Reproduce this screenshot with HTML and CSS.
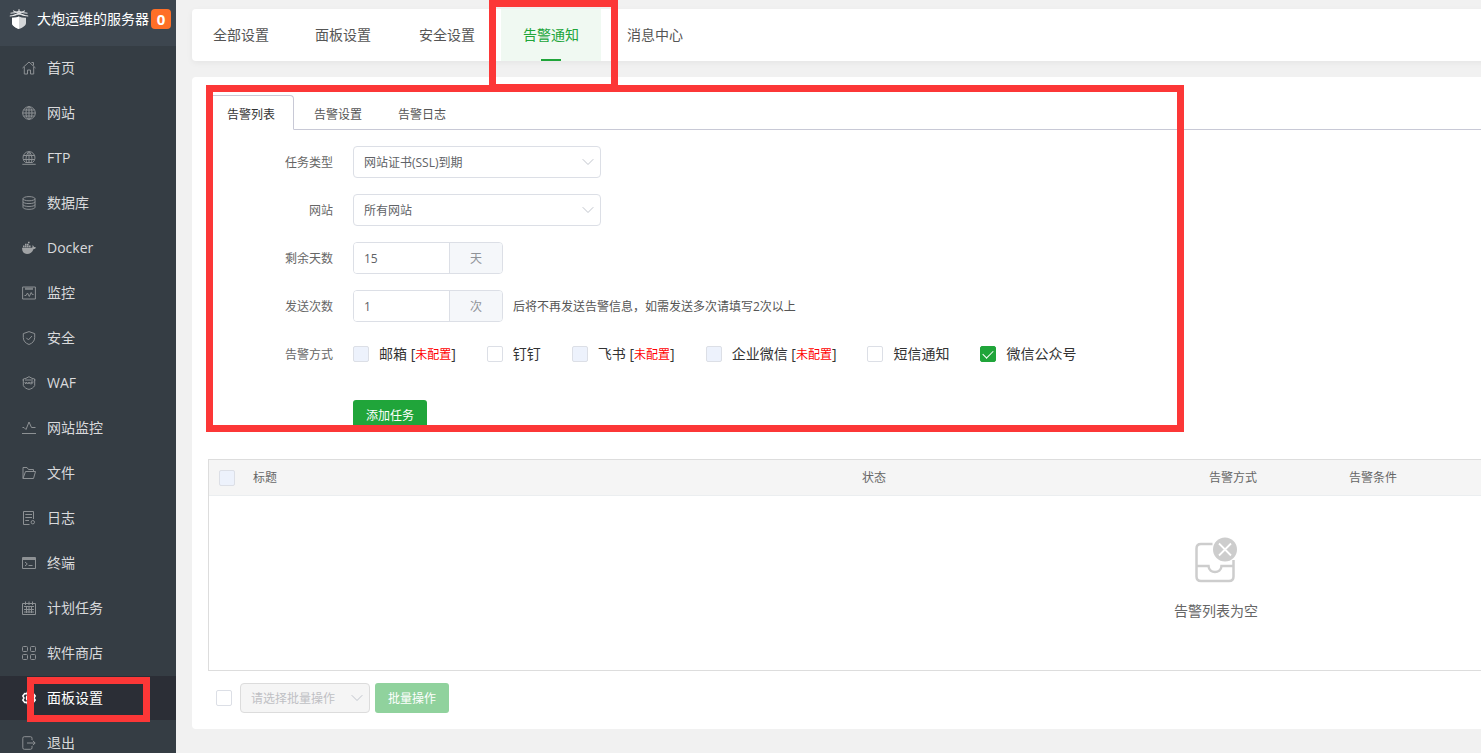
FILE: index.html
```html
<!DOCTYPE html>
<html lang="zh-CN">
<head>
<meta charset="utf-8">
<title>面板设置</title>
<link rel="stylesheet" href="styles.css">
</head>
<body>
<div class="app">
  <aside class="sidebar">
    <header class="brand">
      <svg class="brand-logo" viewBox="0 0 20 20" fill="none">
        <path d="M3 8.800Q7 9 10 7.600Q13 9 17 8.800V14C17 17 13.500 18.600 10 20C6.500 18.600 3 17 3 14Z" fill="#d4d6d8"/>
        <path d="M3 8.800Q7 9 10 7.600V20C6.500 18.600 3 17 3 14Z" fill="#fff"/>
        <path d="M.8 7Q6 6.800 10 4.800Q14 6.800 19.200 7M1.500 4.200Q6.500 4.200 10 2.200Q13.500 4.200 18.500 4.200M4 1.800L16 6.500M16 1.800L4 6.500M10 .2V6" stroke="#e8e9ea" stroke-width="1"/>
      </svg>
      <span class="brand-name">大炮运维的服务器</span>
      <span class="brand-badge">0</span>
    </header>
    <nav class="menu">
      <a class="menu-item" href="#"><svg class="menu-icon" viewBox="0 0 14 14"><path d="M.5 7L7 1L13.500 7M2.300 6V13H5.500V9H8.500V13H11.700V6M9.500 1.500H11.500V4.500"/></svg>首页</a>
      <a class="menu-item" href="#"><svg class="menu-icon" viewBox="0 0 14 14"><circle cx="7" cy="7" r="6.300"/><ellipse cx="7" cy="7" rx="3" ry="6.300"/><path d="M7 .7V13.300M.7 7H13.300M1.500 4H12.500M1.500 10H12.500"/></svg>网站</a>
      <a class="menu-item" href="#"><svg class="menu-icon" viewBox="0 0 14 14"><path d="M3.500 11.500A6 6 0 1 1 10.500 11.500M4.800 11.500C3.500 8.500 3.800 3.500 7 .7C10.200 3.500 10.500 8.500 9.200 11.500M7 .7V11.500M1.300 4.500H12.700M1.200 8.500H12.800M.3 13.300H13.700M3.500 11.500H10.500"/></svg>FTP</a>
      <a class="menu-item" href="#"><svg class="menu-icon" viewBox="0 0 14 14"><ellipse cx="7" cy="2.700" rx="6" ry="2.100"/><path d="M1 2.700V11.300C1 14 13 14 13 11.300V2.700M1 5.700C1 8.200 13 8.200 13 5.700M1 8.600C1 11.100 13 11.100 13 8.600"/></svg>数据库</a>
      <a class="menu-item" href="#"><svg class="menu-icon menu-icon-solid" viewBox="0 0 14 14"><path d="M.1 6.800H9.500C10.500 6.800 10.700 6 10.300 4.300C11.400 4.700 11.900 5.300 12 6C12.900 5.800 13.500 6 14 6.400C13.500 7.600 12.500 7.900 11.600 7.900C10.400 11.200 8 12.900 5 12.900C1.800 12.900 -.2 10.700.1 6.800ZM1 4.600H2.600V6.300H1ZM3 4.600H4.600V6.300H3ZM5 4.600H6.600V6.300H5ZM7 4.600H8.600V6.300H7ZM3 2.700H4.600V4.200H3ZM5 2.700H6.600V4.200H5ZM6 .8H7.600V2.300H6Z"/></svg>Docker</a>
      <a class="menu-item" href="#"><svg class="menu-icon" viewBox="0 0 14 14"><path d="M.6 1H13.400V13H.6ZM3 3.200H11M3 2.200H11M2.500 9.500H4L5.500 7L7.300 10.500L9.200 6.500L10.300 8.500H11.500"/></svg>监控</a>
      <a class="menu-item" href="#"><svg class="menu-icon" viewBox="0 0 14 14"><path d="M7 .6L12.700 2.600V6.500C12.700 10 10.500 12.200 7 13.500C3.500 12.200 1.300 10 1.300 6.500V2.600ZM4.300 6.800L6.400 8.900L10 5"/></svg>安全</a>
      <a class="menu-item" href="#"><svg class="menu-icon" viewBox="0 0 14 14"><path d="M1.300 5V3L4 2.300L7 .7L10 2.300L12.700 3V5M1.300 9.500C2.500 11.800 4.500 12.800 7 13.400C9.500 12.800 11.500 11.800 12.700 9.500M1.300 3V9.500M12.700 3V9.500M3 4H11M2.800 6L3.700 8L4.600 6L5.500 8M6 8L7 6L8 8M9 8.500V6H11.500M9 7H11"/></svg>WAF</a>
      <a class="menu-item" href="#"><svg class="menu-icon" viewBox="0 0 14 14"><path d="M.5 6.500H2L4 8.500L7 1L9.500 6.500H13.500M0 12.500H14"/></svg>网站监控</a>
      <a class="menu-item" href="#"><svg class="menu-icon" viewBox="0 0 14 14"><path d="M1 12.500V1.500H5L6.500 3.500H11.500V5.500M1 12.500L3.500 5.500H13.500L11.500 12.500Z"/></svg>文件</a>
      <a class="menu-item" href="#"><svg class="menu-icon" viewBox="0 0 14 14"><path d="M7.500 13.500H1.500V.5H11.500V8M3.300 3.500H10M3.300 6.500H10M3.300 9.500H7"/><circle cx="10.800" cy="11.200" r="1.700"/></svg>日志</a>
      <a class="menu-item" href="#"><svg class="menu-icon" viewBox="0 0 14 14"><path d="M.5 1.500H13.500V12.500H.5ZM3 6L5.300 8L3 10M6.500 9.500H10.500M.5 2.500H13.500M.5 3.500H13.500"/></svg>终端</a>
      <a class="menu-item" href="#"><svg class="menu-icon" viewBox="0 0 14 14"><path d="M.5 2.500H13.500V13.500H.5ZM3.500.5V4M7 .5V4M10.500.5V4M2 5.500H12M2 8.500H12M2 11H12M4.500 5V12M7 5V12M9.500 5V12"/></svg>计划任务</a>
      <a class="menu-item" href="#"><svg class="menu-icon" viewBox="0 0 14 14"><rect x=".5" y=".5" width="5" height="5" rx="1"/><rect x="8.500" y=".5" width="5" height="5" rx="1"/><rect x=".5" y="8.500" width="5" height="5" rx="1"/><rect x="8.500" y="8.500" width="5" height="5" rx="1"/></svg>软件商店</a>
      <a class="menu-item menu-item-active" href="#" aria-current="page"><svg class="menu-icon" viewBox="0 0 14 14"><path d="M5.500 1H8.500L9.200 2.800L11.300 2.500L13.200 5L12 7L13.200 9L11.300 11.500L9.200 11.200L8.500 13H5.500L4.800 11.200L2.700 11.500L.8 9L2 7L.8 5L2.700 2.500L4.800 2.800Z"/><circle cx="7" cy="7" r="2.500"/></svg>面板设置</a>
      <a class="menu-item" href="#"><svg class="menu-icon" viewBox="0 0 14 14"><path d="M10 4V2.200Q10 .7 8.500 .7H2.300Q.8 .7 .8 2.200V11.800Q.8 13.300 2.300 13.300H8.500Q10 13.300 10 11.800V10M5 7H13M10.800 4.800L13.200 7L10.800 9.200"/></svg>退出</a>
    </nav>
  </aside>

  <main class="content">
    <nav class="topnav">
      <a class="topnav-item" href="#">全部设置</a>
      <a class="topnav-item" href="#">面板设置</a>
      <a class="topnav-item" href="#">安全设置</a>
      <a class="topnav-item topnav-item-active" href="#" aria-current="page">告警通知</a>
      <a class="topnav-item" href="#">消息中心</a>
    </nav>

    <section class="card">
      <div class="tabs" role="tablist">
        <button class="tab tab-active" type="button" role="tab" aria-selected="true">告警列表</button>
        <button class="tab" type="button" role="tab" aria-selected="false">告警设置</button>
        <button class="tab" type="button" role="tab" aria-selected="false">告警日志</button>
      </div>

      <form class="form">
        <div class="form-row">
          <label class="form-label" for="task-type">任务类型</label>
          <div class="select">
            <select class="select-field" id="task-type"><option>网站证书(SSL)到期</option></select>
            <svg class="select-arrow" viewBox="0 0 12 8"><path d="M.7 1.200L6 6.500L11.300 1.200"/></svg>
          </div>
        </div>
        <div class="form-row">
          <label class="form-label" for="site">网站</label>
          <div class="select">
            <select class="select-field" id="site"><option>所有网站</option></select>
            <svg class="select-arrow" viewBox="0 0 12 8"><path d="M.7 1.200L6 6.500L11.300 1.200"/></svg>
          </div>
        </div>
        <div class="form-row">
          <label class="form-label" for="days">剩余天数</label>
          <div class="input-group">
            <input class="input-field" id="days" type="text" value="15">
            <span class="input-unit">天</span>
          </div>
        </div>
        <div class="form-row">
          <label class="form-label" for="times">发送次数</label>
          <div class="input-group">
            <input class="input-field" id="times" type="text" value="1">
            <span class="input-unit">次</span>
          </div>
          <span class="form-hint">后将不再发送告警信息，如需发送多次请填写2次以上</span>
        </div>
        <div class="form-row">
          <span class="form-label">告警方式</span>
          <div class="checks">
            <label class="check"><input class="checkbox" type="checkbox" disabled><span>邮箱 [<span class="warn">未配置</span>]</span></label>
            <label class="check"><input class="checkbox" type="checkbox"><span>钉钉</span></label>
            <label class="check"><input class="checkbox" type="checkbox" disabled><span>飞书 [<span class="warn">未配置</span>]</span></label>
            <label class="check"><input class="checkbox" type="checkbox" disabled><span>企业微信 [<span class="warn">未配置</span>]</span></label>
            <label class="check"><input class="checkbox" type="checkbox"><span>短信通知</span></label>
            <label class="check"><input class="checkbox" type="checkbox" checked><span>微信公众号</span></label>
          </div>
        </div>
        <div class="form-actions">
          <button class="button" type="button">添加任务</button>
        </div>
      </form>

      <table class="table">
        <colgroup>
          <col class="col-check"><col class="col-title"><col class="col-status"><col class="col-method"><col>
        </colgroup>
        <thead>
          <tr>
            <th><input class="checkbox" type="checkbox" aria-label="全选" disabled></th>
            <th>标题</th>
            <th>状态</th>
            <th>告警方式</th>
            <th>告警条件</th>
          </tr>
        </thead>
        <tbody>
          <tr>
            <td colspan="5">
              <div class="empty">
                <svg class="empty-icon" viewBox="0 0 44 48" fill="none">
                  <path d="M18.500 7H7Q2.500 7 2.500 11.500V39.500Q2.500 44 7 44H35Q39.500 44 39.500 39.500V23M2.500 29H14.500C15 37 27 37 27.500 29H39.500" stroke="#cdcdcd" stroke-width="2.500"/>
                  <circle cx="31" cy="12.500" r="12" fill="#cdcdcd"/>
                  <path d="M25 6.500L37 18.500M37 6.500L25 18.500" stroke="#fff" stroke-width="1.800"/>
                </svg>
                <p class="empty-text">告警列表为空</p>
              </div>
            </td>
          </tr>
        </tbody>
      </table>

      <div class="batch">
        <input class="checkbox" type="checkbox" aria-label="选择全部">
        <div class="select select-small">
          <select class="select-field" aria-label="批量操作" disabled><option>请选择批量操作</option></select>
          <svg class="select-arrow" viewBox="0 0 12 8"><path d="M.7 1.200L6 6.500L11.300 1.200"/></svg>
        </div>
        <button class="button button-small" type="button" disabled>批量操作</button>
      </div>
    </section>
  </main>

  <div class="mark mark-topnav"></div>
  <div class="mark mark-form"></div>
  <div class="mark mark-menu"></div>
</div>
</body>
</html>
```

FILE: styles.css
```css
* {
  box-sizing: border-box;
}

body {
  margin: 0;
  background: #f1f1f1;
  color: #666;
  font-family: "Open Sans", "Noto Sans CJK SC", sans-serif;
  font-size: 12px;
  line-height: 20px;
}

button,
input,
select {
  margin: 0;
  font: inherit;
}

a {
  color: inherit;
  text-decoration: none;
}

.app {
  position: relative;
  display: flex;
  height: 100vh;
  overflow: hidden;
}

/* Sidebar */

.sidebar {
  flex: none;
  width: 176px;
  background: #353d44;
  overflow: hidden;
}

.brand {
  display: flex;
  align-items: center;
  height: 46px;
  padding: 0 5px 8px 9px;
  background: #3d464f;
  color: #fff;
  font-size: 14px;
}

.brand-logo {
  width: 20px;
  height: 20px;
  margin-right: 8px;
}

.brand-name {
  flex: 1;
  white-space: nowrap;
}

.brand-badge {
  width: 20px;
  border-radius: 4px;
  background: #ff6f27;
  font-size: 15px;
  font-weight: 700;
  text-align: center;
}

.menu {
  display: flex;
  flex-direction: column;
  gap: 1px;
}

.menu-item {
  display: flex;
  align-items: center;
  gap: 11px;
  height: 44px;
  padding-left: 22px;
  color: #d9dadc;
  font-size: 14px;
}

.menu-item-active {
  background: #2b2e36;
  color: #fff;
}

.menu-icon {
  width: 14px;
  height: 14px;
  fill: none;
  stroke: #8d9194;
}

.menu-icon-solid {
  fill: #a0a3a5;
  stroke: none;
}

.menu-item-active .menu-icon {
  stroke: #fff;
  stroke-width: 1.5;
}

/* Content */

.content {
  flex: 1 1 0;
  min-width: 2080px;
  padding: 9px 16px;
}

.topnav {
  display: flex;
  gap: 4px;
  height: 52px;
  margin-bottom: 16px;
  border-radius: 4px;
  background: #fff;
  box-shadow: 0 2px 6px rgba(0, 0, 0, 0.05);
  color: #555;
  font-size: 14px;
}

.topnav-item {
  display: flex;
  align-items: center;
  padding: 0 22px;
}

.topnav-item:first-child {
  padding: 0 20px 0 21px;
}

.topnav-item-active {
  position: relative;
  background: #f0f9f2;
  color: #20a53a;
}

.topnav-item-active::after {
  content: "";
  position: absolute;
  bottom: 0;
  left: 40px;
  width: 20px;
  height: 2px;
  background: #20a53a;
}

.card {
  padding: 18px 16px 16px;
  border-radius: 4px;
  background: #fff;
}

.tabs {
  display: flex;
  height: 35px;
  margin-bottom: 16px;
  border-bottom: 1px solid #c8c9d6;
}

.tab {
  height: 35px;
  padding: 4px 18px 0;
  border: 0;
  background: none;
  color: #555;
}

.tab-active {
  margin-right: 2px;
  border: 1px solid #c8c9d6;
  border-bottom-color: #fff;
  border-radius: 4px 4px 0 0;
  background: #fff;
  color: #333;
}

/* Form */

.form {
  display: flex;
  flex-direction: column;
  gap: 16px;
  margin-bottom: 27px;
}

.form-row {
  display: flex;
  align-items: center;
  height: 32px;
}

.form-label {
  width: 125px;
  margin-right: 20px;
  padding-top: 2px;
  text-align: right;
}

.form-hint {
  margin-left: 10px;
  padding-top: 2px;
  color: #555;
}

.form-actions {
  padding: 14px 0 0 145px;
}

.select {
  position: relative;
  width: 248px;
  height: 32px;
}

.select-small {
  width: 130px;
  height: 30px;
}

.select-field {
  width: 100%;
  height: 100%;
  padding: 2px 24px 0 10px;
  border: 1px solid #dcdfe6;
  border-radius: 4px;
  appearance: none;
  background: #fff;
  color: #606266;
}

.select-field:disabled {
  border-color: #dcdcdc;
  background: #f5f5f5;
  color: #bfc0c4;
  opacity: 1;
}

.select-arrow {
  position: absolute;
  top: 50%;
  right: 7px;
  width: 12px;
  height: 8px;
  margin-top: -4px;
  fill: none;
  stroke: #c0c4cc;
  pointer-events: none;
}

.input-group {
  display: flex;
  width: 150px;
  height: 32px;
  border: 1px solid #dcdfe6;
  border-radius: 4px;
  overflow: hidden;
}

.input-field {
  flex: 1;
  min-width: 0;
  padding: 2px 10px 0;
  border: 0;
  background: #fff;
  color: #606266;
}

.input-unit {
  width: 53px;
  border-left: 1px solid #dcdfe6;
  background: #f5f7fa;
  color: #909399;
  line-height: 32px;
  text-align: center;
}

.checks {
  display: flex;
  gap: 31px;
}

.check {
  display: flex;
  align-items: center;
  gap: 10px;
  color: #333;
  font-size: 14px;
}

.warn {
  color: #f00;
  font-size: 12px;
}

.checkbox {
  display: block;
  flex: none;
  width: 16px;
  height: 16px;
  border: 1px solid #dcdfe6;
  border-radius: 2px;
  appearance: none;
  background: #fff;
}

.checkbox:disabled {
  background: #edf2fc;
}

.checkbox:checked {
  border-color: #20a53a;
  background: #20a53a;
}

.checkbox:checked::after {
  content: "";
  display: block;
  width: 9px;
  height: 5px;
  margin: 3px 2px;
  border: solid #fff;
  border-width: 0 0 1px 1px;
  transform: rotate(-45deg);
}

.button {
  display: block;
  height: 32px;
  padding: 0 13px;
  border: 0;
  border-radius: 3px;
  background: #20a53a;
  color: #fff;
}

.button-small {
  height: 30px;
  padding-top: 2px;
}

.button:disabled {
  background: #90d29d;
}

/* Task table */

.table {
  width: 100%;
  border: 1px solid #ddd;
  border-spacing: 0;
  table-layout: fixed;
}

.table th {
  height: 36px;
  padding: 0 10px;
  border-bottom: 1px solid #ebeef0;
  background: #f5f5f5;
  font-weight: 400;
  text-align: left;
}

.table td {
  padding: 0;
}

.col-check {
  width: 34px;
}

.col-title {
  width: 609px;
}

.col-status {
  width: 347px;
}

.col-method {
  width: 140px;
}

.empty {
  display: flex;
  flex-direction: column;
  align-items: center;
  gap: 16px;
  height: 174px;
  padding-top: 41px;
}

.empty-icon {
  width: 44px;
  height: 48px;
}

.empty-text {
  margin: 0;
  font-size: 14px;
}

.batch {
  display: flex;
  align-items: center;
  padding: 12px 0 0 8px;
}

.batch .select {
  margin: 0 5px 0 8px;
}

/* Highlight frames laid over the page */

.mark {
  position: absolute;
  border: 7px solid #fc3737;
  pointer-events: none;
}

.mark-topnav {
  top: 0;
  left: 489px;
  width: 129px;
  height: 91px;
}

.mark-form {
  top: 85px;
  left: 206px;
  width: 978px;
  height: 347px;
}

.mark-menu {
  top: 677px;
  left: 27px;
  width: 123px;
  height: 45px;
}
```
